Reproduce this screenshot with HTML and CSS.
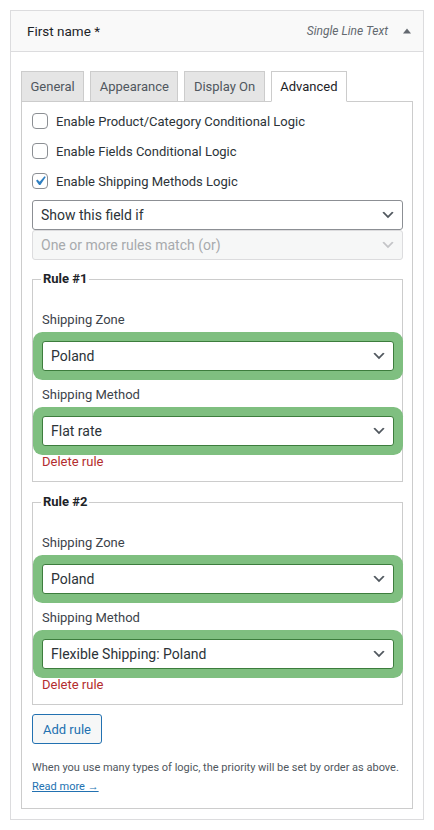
FILE: index.html
```html
<!DOCTYPE html>
<html lang="en">
<head>
<meta charset="utf-8">
<title>First name field</title>
<link rel="stylesheet" href="styles.css">
</head>
<body>
<div class="field">
  <div class="field-head">
    <span class="field-title">First name *</span>
    <span class="field-type">Single Line Text</span>
    <svg class="toggle" width="8" height="6" viewBox="0 0 8 6"><polygon points="0,5.5 4,0.5 8,5.5" fill="#646970"/></svg>
  </div>
  <div class="field-body">
    <div class="tabs">
      <div class="tab">General</div>
      <div class="tab">Appearance</div>
      <div class="tab">Display On</div>
      <div class="tab active">Advanced</div>
    </div>
    <div class="panel">
      <label class="check-row"><span class="cb"></span>Enable Product/Category Conditional Logic</label>
      <label class="check-row"><span class="cb"></span>Enable Fields Conditional Logic</label>
      <label class="check-row"><span class="cb checked"><svg width="16" height="16" viewBox="2.5 2.5 15 15"><path d="M14.83 4.89l1.34.94-5.81 8.38H9.02L5.78 9.67l1.34-1.25 2.57 2.4z" fill="#2f7fc1"/></svg></span>Enable Shipping Methods Logic</label>

      <div class="select first">
        <span>Show this field if</span>
        <svg class="chev" width="16" height="16" viewBox="0 0 20 20"><path d="M5 6l5 5 5-5 2 1-7 7-7-7 2-1z" fill="#50575e"/></svg>
      </div>
      <div class="select disabled">
        <span>One or more rules match (or)</span>
        <svg class="chev" width="16" height="16" viewBox="0 0 20 20"><path d="M5 6l5 5 5-5 2 1-7 7-7-7 2-1z" fill="#c3c4c7"/></svg>
      </div>

      <fieldset class="rule">
        <legend>Rule #1</legend>
        <div class="rule-label">Shipping Zone</div>
        <div class="select hl">
          <span>Poland</span>
          <svg class="chev" width="16" height="16" viewBox="0 0 20 20"><path d="M5 6l5 5 5-5 2 1-7 7-7-7 2-1z" fill="#50575e"/></svg>
        </div>
        <div class="rule-label second">Shipping Method</div>
        <div class="select hl">
          <span>Flat rate</span>
          <svg class="chev" width="16" height="16" viewBox="0 0 20 20"><path d="M5 6l5 5 5-5 2 1-7 7-7-7 2-1z" fill="#50575e"/></svg>
        </div>
        <a class="delete" href="#">Delete rule</a>
      </fieldset>

      <fieldset class="rule">
        <legend>Rule #2</legend>
        <div class="rule-label">Shipping Zone</div>
        <div class="select hl">
          <span>Poland</span>
          <svg class="chev" width="16" height="16" viewBox="0 0 20 20"><path d="M5 6l5 5 5-5 2 1-7 7-7-7 2-1z" fill="#50575e"/></svg>
        </div>
        <div class="rule-label second">Shipping Method</div>
        <div class="select hl">
          <span>Flexible Shipping: Poland</span>
          <svg class="chev" width="16" height="16" viewBox="0 0 20 20"><path d="M5 6l5 5 5-5 2 1-7 7-7-7 2-1z" fill="#50575e"/></svg>
        </div>
        <a class="delete" href="#">Delete rule</a>
      </fieldset>

      <button class="add-rule" type="button">Add rule</button>
      <p class="help">When you use many types of logic, the priority will be set by order as above.<br><a href="#">Read more →</a></p>
    </div>
  </div>
</div>
</body>
</html>
```

FILE: styles.css
```css
* { box-sizing: border-box; }

body {
  margin: 0;
  background: #ffffff;
  font-family: Roboto, "Liberation Sans", sans-serif;
  font-size: 13px;
  color: #2c3338;
}

.field {
  margin: 10px 10px 0 10px;
  border: 1px solid #dcdcde;
  background: #ffffff;
}

.field-head {
  height: 41px;
  display: flex;
  align-items: center;
  padding: 0 12px 0 16px;
  background: #f9f9f9;
  border-bottom: 1px solid #dcdcde;
}

.field-title {
  font-size: 13.5px;
  color: #1d2327;
  flex: 1;
}

.field-type {
  font-style: italic;
  font-size: 12px;
  color: #646970;
  margin-right: 15px;
}

.toggle { display: block; }

.field-body {
  padding: 19px 10px 10px 10px;
}

.tabs {
  display: flex;
  gap: 6px;
  margin-bottom: -1px;
  position: relative;
  z-index: 1;
}

.tab {
  height: 31px;
  line-height: 29px;
  padding: 0 8.5px;
  border: 1px solid #cccccc;
  background: #e5e5e5;
  color: #50575e;
  font-size: 13px;
}

.tab.active {
  background: #ffffff;
  border-bottom-color: #ffffff;
  color: #1d2327;
}

.panel {
  border: 1px solid #cccccc;
  padding: 4px 9px 12px 10px;
}

.check-row {
  display: flex;
  align-items: center;
  gap: 8px;
  height: 30px;
  color: #2c3338;
}

.cb {
  width: 16px;
  height: 16px;
  border: 1px solid #8c8f94;
  border-radius: 4px;
  background: #ffffff;
  display: flex;
  align-items: center;
  justify-content: center;
  flex: none;
}

.cb svg { display: block; }

.select {
  height: 30px;
  display: flex;
  align-items: center;
  justify-content: space-between;
  padding: 0 6px 0 8px;
  border: 1px solid #8c8f94;
  border-radius: 3px;
  background: #ffffff;
  font-size: 14px;
  color: #2c3338;
}

.select.first { margin-top: 4px; }

.select.disabled {
  background: #f6f7f7;
  border-color: #dcdcde;
  color: #a7aaad;
}

.chev { display: block; flex: none; }

.select.hl {
  border-color: #3d7d3d;
  box-shadow: 0 0 0 9px #7fbf80;
}

.rule {
  margin: 9px 0 0 0;
  border: 1px solid #cccccc;
  padding: 21px 8px 9px 9px;
  min-width: 0;
}

.rule + .rule { margin-top: 10px; }

.rule legend {
  font-weight: bold;
  font-size: 13px;
  line-height: 20px;
  padding: 0 2px;
  margin-left: -1px;
  color: #1d2327;
}

.rule-label {
  line-height: 20px;
  font-size: 13px;
  color: #3c434a;
  margin-bottom: 11px;
}

.rule-label.second { margin-top: 14px; }

.delete {
  display: block;
  margin-top: 6px;
  line-height: 20px;
  font-size: 13px;
  color: #b32d2e;
  text-decoration: none;
}

.add-rule {
  display: block;
  margin-top: 9px;
  height: 30px;
  padding: 0 10px;
  border: 1px solid #2271b1;
  border-radius: 3px;
  background: #f6f7f7;
  color: #2271b1;
  font-family: inherit;
  font-size: 13px;
}

.help {
  margin: 14px 0 0 0;
  font-size: 11px;
  line-height: 19px;
  color: #50575e;
}

.help a {
  color: #2271b1;
  text-decoration: underline;
}
```
